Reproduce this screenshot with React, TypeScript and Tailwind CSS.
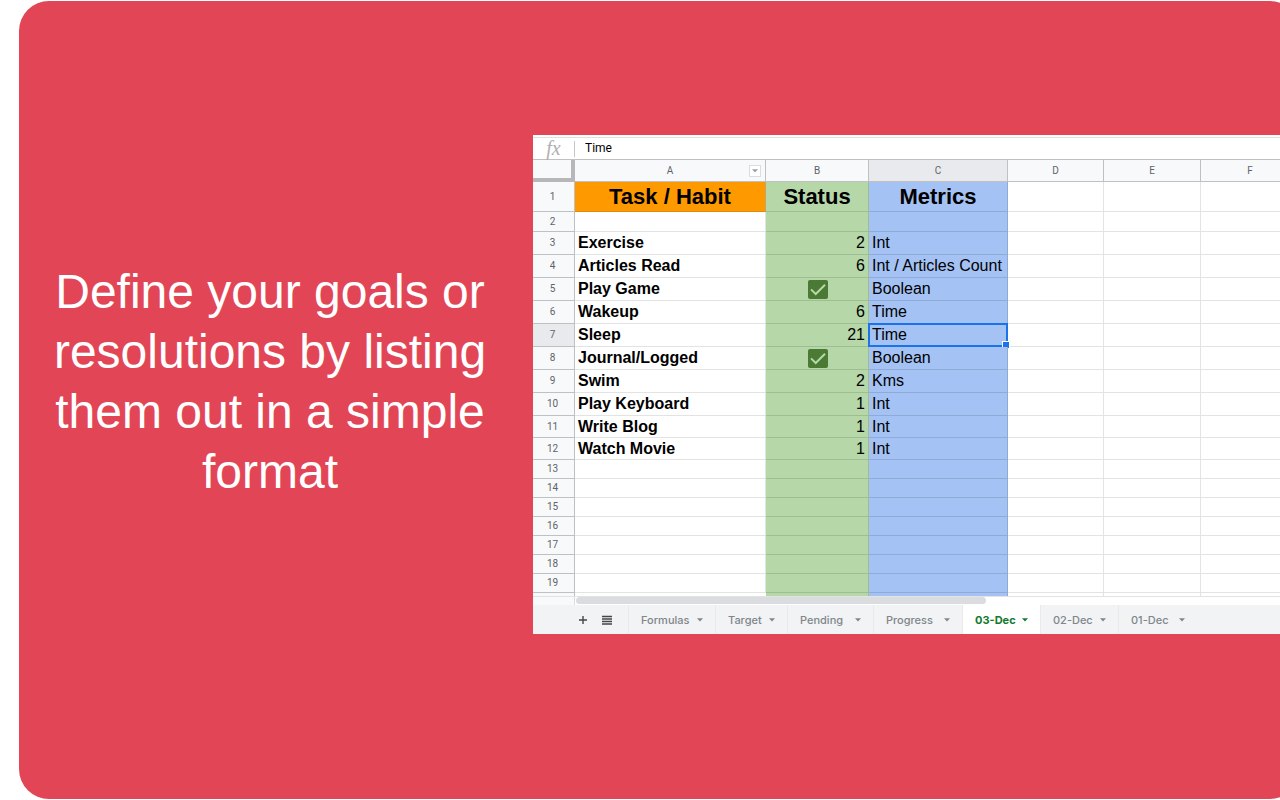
import { useState } from "react";
import type { ReactNode } from "react";

type Row = { n: number; height: string; task?: string; status?: string | boolean; metric?: string };

const rows: Row[] = [
  { n: 2, height: "h-5" },
  { n: 3, height: "h-[23px]", task: "Exercise", status: "2", metric: "Int" },
  { n: 4, height: "h-[23px]", task: "Articles Read", status: "6", metric: "Int / Articles Count" },
  { n: 5, height: "h-[23px]", task: "Play Game", status: true, metric: "Boolean" },
  { n: 6, height: "h-[23px]", task: "Wakeup", status: "6", metric: "Time" },
  { n: 7, height: "h-[23px]", task: "Sleep", status: "21", metric: "Time" },
  { n: 8, height: "h-[23px]", task: "Journal/Logged", status: true, metric: "Boolean" },
  { n: 9, height: "h-[23px]", task: "Swim", status: "2", metric: "Kms" },
  { n: 10, height: "h-[23px]", task: "Play Keyboard", status: "1", metric: "Int" },
  { n: 11, height: "h-[22px]", task: "Write Blog", status: "1", metric: "Int" },
  { n: 12, height: "h-[22px]", task: "Watch Movie", status: "1", metric: "Int" },
  { n: 13, height: "h-[19px]" },
  { n: 14, height: "h-[19px]" },
  { n: 15, height: "h-[19px]" },
  { n: 16, height: "h-[19px]" },
  { n: 17, height: "h-[19px]" },
  { n: 18, height: "h-[19px]" },
  { n: 19, height: "h-[19px]" },
];

const tabs = [
  { name: "Formulas", width: "w-[87px]" },
  { name: "Target", width: "w-[72px]" },
  { name: "Pending", width: "w-[86px]" },
  { name: "Progress", width: "w-[89px]" },
  { name: "03-Dec", width: "w-[78px]" },
  { name: "02-Dec", width: "w-[78px]" },
  { name: "01-Dec", width: "w-[78px]" },
];

const selectedRow = 7;

function Caret({ className }: { className: string }) {
  return (
    <svg viewBox="0 0 6 4" className={className} aria-hidden="true">
      <path d="M0 0.3h6L3 3.6z" fill="currentColor" />
    </svg>
  );
}

function RowNumber({ n }: { n: number }) {
  return (
    <th
      scope="row"
      className={`border-r border-b border-[#c0c0c0] pr-0.5 font-[Roboto,sans-serif] text-[10px] leading-3 font-normal text-[#5f6368] ${
        n === selectedRow ? "bg-[#e8eaed]" : "bg-[#f8f9fa]"
      }`}
    >
      {n}
    </th>
  );
}

function ColumnHeader({ children, selected = false }: { children: ReactNode; selected?: boolean }) {
  return (
    <th
      scope="col"
      className={`border-r border-b border-[#c0c0c0] font-[Roboto,sans-serif] text-[10px] leading-3 font-normal text-[#5f6368] ${
        selected ? "bg-[#e8eaed]" : "bg-[#f8f9fa]"
      }`}
    >
      {children}
    </th>
  );
}

function Tick({ label }: { label: string }) {
  const [done, setDone] = useState(true);
  return (
    <span className="grid place-items-center">
      <input
        type="checkbox"
        aria-label={label}
        checked={done}
        onChange={() => setDone(!done)}
        className="col-start-1 row-start-1 h-[19px] w-5 appearance-none rounded-[2px] bg-[#4a7a33]"
      />
      {done && (
        <svg viewBox="0 0 20 19" className="pointer-events-none col-start-1 row-start-1 h-[19px] w-5" aria-hidden="true">
          <path d="M3 9.4l4.7 4.6L17 4.7" fill="none" stroke="#b6d7a8" strokeWidth="2" />
        </svg>
      )}
    </span>
  );
}

function Sheet() {
  const plain = "border-r border-b border-[#e2e3e3]";
  return (
    <table className="w-full table-fixed border-separate border-spacing-0 text-[16px] leading-[18px] text-black">
      <colgroup>
        <col className="w-[42px]" />
        <col className="w-[191px]" />
        <col className="w-[103px]" />
        <col className="w-[139px]" />
        <col className="w-24" />
        <col className="w-[97px]" />
        <col />
      </colgroup>
      <thead>
        <tr className="h-[22px]">
          <td className="border-r-4 border-b-4 border-[#b7b7b7] bg-[#f8f9fa]" />
          <ColumnHeader>
            <span className="grid grid-cols-[1fr_auto_1fr] items-center">
              <span className="col-start-2">A</span>
              <button
                type="button"
                aria-label="Column A menu"
                className="mr-1 flex size-3 items-center justify-center justify-self-end border border-[#dadce0] bg-white text-[#9aa0a6]"
              >
                <Caret className="h-1 w-1.5" />
              </button>
            </span>
          </ColumnHeader>
          <ColumnHeader>B</ColumnHeader>
          <ColumnHeader selected>C</ColumnHeader>
          <ColumnHeader>D</ColumnHeader>
          <ColumnHeader>E</ColumnHeader>
          <ColumnHeader>F</ColumnHeader>
        </tr>
      </thead>
      <tbody>
        <tr className="h-[30px] text-[22px] leading-6">
          <RowNumber n={1} />
          <td className="border-r border-b border-r-[#c9a26a] border-b-[#e08a10] bg-[#ff9900] text-center font-bold">Task / Habit</td>
          <td className="border-r border-b border-black/12 bg-[#b6d7a8] text-center font-bold">Status</td>
          <td className="border-r border-b border-black/12 bg-[#a4c2f4] text-center font-bold">Metrics</td>
          <td className={plain} />
          <td className={plain} />
          <td className={plain} />
        </tr>
        {rows.map((row) => (
          <tr key={row.n} className={row.height}>
            <RowNumber n={row.n} />
            <td className={`${plain} pl-[3px] font-bold whitespace-nowrap`}>{row.task}</td>
            <td className="border-r border-b border-black/12 bg-[#b6d7a8] pr-[3px] pl-1 text-right">
              {row.status === true ? <Tick label={`${row.task} done`} /> : row.status}
            </td>
            <td className="relative border-r border-b border-black/12 bg-[#a4c2f4] pl-[3px] whitespace-nowrap">
              {row.metric}
              {row.n === selectedRow && (
                <span className="pointer-events-none absolute -inset-px border-2 border-[#1a73e8]">
                  <span className="absolute -right-1 -bottom-1 size-2 border border-white bg-[#1a73e8]" />
                </span>
              )}
            </td>
            <td className={plain} />
            <td className={plain} />
            <td className={plain} />
          </tr>
        ))}
        <tr className="h-[3px]">
          <td className="border-r border-[#c0c0c0] bg-[#f8f9fa]" />
          <td />
          <td className="border-r border-black/12 bg-[#b6d7a8]" />
          <td className="border-r border-black/12 bg-[#a4c2f4]" />
          <td className="border-r border-[#e2e3e3]" />
          <td className="border-r border-[#e2e3e3]" />
          <td />
        </tr>
      </tbody>
    </table>
  );
}

export default function App() {
  const [active, setActive] = useState("03-Dec");

  return (
    <div className="min-h-screen overflow-hidden bg-white py-px pl-[19px] font-['Liberation_Sans',Arial,sans-serif]">
      <main className="-mr-5 grid min-h-[calc(100vh-2px)] grid-cols-[514px_minmax(0,1fr)] items-center rounded-[30px] bg-[#e24656] pb-[31px]">
        <h1 className="pr-8 pb-1.5 pl-5 text-center text-[48px] leading-[60px] text-white">
          Define your goals or resolutions by listing them out in a simple format
        </h1>

        <section aria-label="Spreadsheet" className="overflow-hidden bg-white pt-0.5">
          <div className="flex h-[23px] items-center border-y border-t-[#e0e0e0] border-b-[#c0c0c0]">
            <label
              htmlFor="formula"
              className="w-[42px] border-r border-[#c6c6c6] pb-0.5 text-center font-['Liberation_Serif',serif] text-[20px] leading-3.5 text-[#b0b0b0] italic"
            >
              fx
            </label>
            <input
              id="formula"
              defaultValue="Time"
              className="min-w-0 flex-1 pb-0.5 pl-2.5 font-[Roboto,sans-serif] text-[12px] leading-4 text-black outline-none"
            />
          </div>

          <Sheet />

          <div className="flex h-[9px] border-t border-[#e2e3e3]">
            <div className="w-[42px] border-r border-[#dadce0] bg-[#f8f9fa]" />
            <div className="ml-px h-[7px] w-[410px] rounded-full bg-[#dadce0]" />
          </div>

          <nav aria-label="Sheets" className="flex h-[29px] bg-[#f1f3f4] font-[Inter,sans-serif] text-[11px] leading-4 font-medium text-[#80868b]">
            <div className="flex w-24 items-center gap-3 border-r border-[#e8eaed] pl-11 text-[#444746]">
              <button type="button" aria-label="Add sheet">
                <svg viewBox="0 0 12 12" className="size-3" aria-hidden="true">
                  <path d="M6 2v8M2 6h8" stroke="currentColor" strokeWidth="1.4" />
                </svg>
              </button>
              <button type="button" aria-label="All sheets">
                <svg viewBox="0 0 12 12" className="size-3" aria-hidden="true">
                  <path d="M1 2.5h10M1 5h10M1 7.5h10M1 10h10" stroke="currentColor" strokeWidth="1.3" />
                </svg>
              </button>
            </div>
            {tabs.map((tab) => (
              <button
                key={tab.name}
                type="button"
                onClick={() => setActive(tab.name)}
                aria-current={active === tab.name ? "page" : undefined}
                className={`flex shrink-0 items-center justify-between border-r border-[#e8eaed] px-3 last:border-r-0 ${tab.width} ${
                  active === tab.name ? "bg-white font-bold text-[#137a2c]" : ""
                }`}
              >
                {tab.name}
                <Caret className="h-1 w-1.5" />
              </button>
            ))}
          </nav>
        </section>
      </main>
    </div>
  );
}
